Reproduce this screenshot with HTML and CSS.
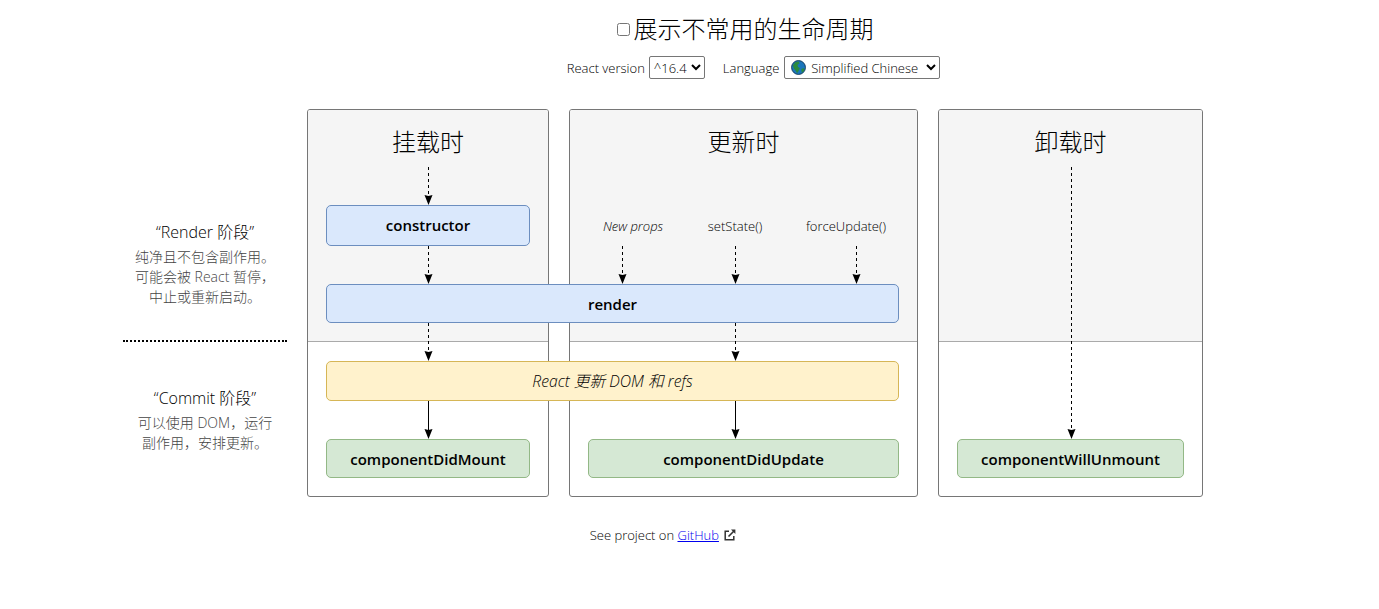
FILE: index.html
```html
<!DOCTYPE html>
<html lang="zh-CN">
<head>
<meta charset="utf-8">
<title>React lifecycle methods diagram</title>
<link rel="stylesheet" href="styles.css">
</head>
<body>
<div class="app">
  <header class="header">
    <label class="title"><input class="title-check" type="checkbox">展示不常用的生命周期</label>
    <div class="controls">
      <label class="control">React version
        <select class="select select-version"><option>^16.4</option><option>^16.3</option></select>
      </label>
      <label class="control control-lang">Language
        <span class="select-wrap">
          <svg class="globe" viewBox="0 0 16 16" aria-hidden="true">
            <circle cx="8" cy="8" r="7.4" fill="#1b75bb" stroke="#123a5c" stroke-width="1"/>
            <path d="M2 5.5 5 2.2 8.5 1.5 9 4 7 5 7.5 7.5 9.5 8.5 8.5 11 6.5 14 5 11.5 3 9Z" fill="#2a8a3e"/>
            <path d="M11 9.5 14 8.5 14 11.5 11.5 13.5Z" fill="#2a8a3e"/>
          </svg>
          <select class="select select-lang"><option>Simplified Chinese</option><option>English</option></select>
        </span>
      </label>
    </div>
  </header>

  <main class="diagram">
    <aside class="side">
      <div class="stage stage-render">
        <h3 class="stage-title">“Render 阶段”</h3>
        <p class="stage-desc">纯净且不包含副作用。<br>可能会被 React 暂停，<br>中止或重新启动。</p>
      </div>
      <div class="divider"></div>
      <div class="stage stage-commit">
        <h3 class="stage-title">“Commit 阶段”</h3>
        <p class="stage-desc">可以使用 DOM，运行<br>副作用，安排更新。</p>
      </div>
    </aside>

    <section class="panels">
      <div class="panel panel-mount"><div class="panel-top"><h2 class="panel-title">挂载时</h2></div></div>
      <div class="panel panel-update"><div class="panel-top"><h2 class="panel-title">更新时</h2></div></div>
      <div class="panel panel-unmount"><div class="panel-top"><h2 class="panel-title">卸载时</h2></div></div>
    </section>

    <svg class="arrows" width="1080" height="388" viewBox="123 109 1080 388" aria-hidden="true">
      <g class="dash">
        <path d="M428.5 167V200"/>
        <path d="M428.5 246V279"/>
        <path d="M428.5 323V356"/>
        <path d="M622.5 246V279"/>
        <path d="M735.5 246V279"/>
        <path d="M856.5 246V279"/>
        <path d="M735.5 323V356"/>
        <path d="M1071.5 167V434"/>
      </g>
      <g class="solid">
        <path d="M428.5 401V434"/>
        <path d="M735.5 401V434"/>
      </g>
      <g class="heads">
        <path d="M424.5 195 428.5 196 432.5 195 428.5 205Z"/>
        <path d="M424.5 274 428.5 275 432.5 274 428.5 284Z"/>
        <path d="M424.5 351 428.5 352 432.5 351 428.5 361Z"/>
        <path d="M424.5 429 428.5 430 432.5 429 428.5 439Z"/>
        <path d="M618.5 274 622.5 275 626.5 274 622.5 284Z"/>
        <path d="M731.5 274 735.5 275 739.5 274 735.5 284Z"/>
        <path d="M852.5 274 856.5 275 860.5 274 856.5 284Z"/>
        <path d="M731.5 351 735.5 352 739.5 351 735.5 361Z"/>
        <path d="M731.5 429 735.5 430 739.5 429 735.5 439Z"/>
        <path d="M1067.5 429 1071.5 430 1075.5 429 1071.5 439Z"/>
      </g>
    </svg>

    <div class="node blue n-constructor">constructor</div>
    <div class="node blue n-render">render</div>
    <div class="node yellow n-dom">React 更新 DOM 和 refs</div>
    <div class="node green n-didmount">componentDidMount</div>
    <div class="node green n-didupdate">componentDidUpdate</div>
    <div class="node green n-unmount">componentWillUnmount</div>

    <div class="trigger t-props"><em>New props</em></div>
    <div class="trigger t-state">setState()</div>
    <div class="trigger t-force">forceUpdate()</div>
  </main>

  <footer class="footer">See project on <a href="#">GitHub</a>
    <svg class="ext" viewBox="0 0 12 12" aria-hidden="true">
      <path d="M5 2.2H1.2V10.8H9.8V7" fill="none" stroke="#333" stroke-width="1.5"/>
      <path d="M4.5 7.5 10 2" fill="none" stroke="#333" stroke-width="1.6"/>
      <path d="M7 .6H11.4V5Z" fill="#333"/>
    </svg>
  </footer>
</div>
</body>
</html>
```
FILE: styles.css
```css
* { box-sizing: border-box; }
html, body { margin: 0; padding: 0; background: #fff; }
body {
  font-family: "Open Sans", "Noto Sans CJK SC", sans-serif;
  font-weight: 300;
  color: #000;
}
.app { width: 1080px; margin-left: 123px; }

.header { padding-left: 164px; display: flex; flex-direction: column; align-items: center; }
.title {
  display: flex;
  align-items: center;
  height: 34px;
  margin-top: 11px;
  margin-left: -3px;
  font-size: 24px;
  line-height: 34px;
  font-family: "Noto Sans CJK SC", sans-serif;
  font-weight: 300;
}
.title-check { width: 13px; height: 13px; margin: 3px 4px 0 3px; }
.controls {
  display: flex;
  align-items: center;
  gap: 18px;
  height: 23px;
  margin-top: 11px;
  margin-left: 17px;
  font-size: 13px;
  color: #000;
}
.control { display: flex; align-items: center; gap: 4px; white-space: nowrap; }
.control-lang { gap: 5px; }
.select {
  height: 23px;
  font-family: "Open Sans", "Noto Sans CJK SC", sans-serif;
  font-size: 13px;
  font-weight: 300;
  background: #fff;
  color: #000;
  border: 1px solid #767676;
  border-radius: 2px;
}
.select-version { width: 56px; }
.select-lang { width: 156px; padding-left: 22px; }
.select-wrap { position: relative; display: block; }
.globe { position: absolute; left: 7px; top: 4px; width: 15px; height: 15px; pointer-events: none; }

.diagram { position: relative; display: flex; margin-top: 30px; height: 388px; }

.side { width: 164px; margin-right: 20px; text-align: center; }
.stage-render { padding-top: 111px; }
.stage-title { margin: 0; font-size: 16px; line-height: 24px; font-weight: 300; color: #000; }
.stage-desc { margin: 3px 0 0; font-size: 14px; line-height: 20px; color: #444; }
.divider { margin-top: 33px; border-top: 2px dotted #000; }
.stage-commit { padding-top: 44px; }

.panels { display: flex; gap: 20px; }
.panel { height: 388px; border: 1px solid #767676; border-radius: 3px; overflow: hidden; background: #fff; }
.panel-mount { width: 242px; }
.panel-update { width: 349px; }
.panel-unmount { width: 265px; }
.panel-top { height: 232px; background: #f5f5f5; border-bottom: 1px solid #aaa; padding-top: 14px; text-align: center; }
.panel-title {
  margin: 0;
  font-family: "Noto Sans CJK SC", sans-serif;
  font-size: 24px;
  line-height: 34px;
  font-weight: 300;
  color: #000;
}

.arrows { position: absolute; left: 0; top: 0; pointer-events: none; }
.dash path { fill: none; stroke: #000; stroke-width: 1; stroke-dasharray: 3 3; }
.solid path { fill: none; stroke: #000; stroke-width: 1; }
.heads path { fill: #000; }

.node {
  position: absolute;
  display: flex;
  align-items: center;
  justify-content: center;
  border: 1px solid;
  border-radius: 5px;
  padding-top: 1px;
  font-size: 15px;
  font-weight: 600;
}
.blue { background: #dae8fc; border-color: #6c8ebf; }
.yellow { background: #fff2cc; border-color: #d6b656; font-size: 15.7px; font-weight: 300; font-style: italic; }
.green { background: #d5e8d4; border-color: #93b886; }
.n-constructor { left: 203px; top: 96px; width: 204px; height: 41px; padding: 0 0 1px; }
.n-render { left: 203px; top: 175px; width: 573px; height: 39px; }
.n-dom { left: 203px; top: 252px; width: 573px; height: 40px; padding: 0 0 1px; }
.n-didmount { left: 203px; top: 330px; width: 204px; height: 39px; }
.n-didupdate { left: 465px; top: 330px; width: 311px; height: 39px; }
.n-unmount { left: 834px; top: 330px; width: 227px; height: 39px; }

.trigger { position: absolute; top: 108px; font-size: 13px; line-height: 18px; white-space: nowrap; color: #000; transform: translateX(-50%); }
.t-props { left: 510px; }
.t-state { left: 612px; }
.t-force { left: 723px; }

.footer {
  margin-top: 28px;
  text-align: center;
  font-size: 13px;
  line-height: 20px;
  color: #000;
}
.footer a { color: #00e; text-decoration: underline; }
.ext { width: 12px; height: 12px; margin-left: 2px; vertical-align: -1px; }
```
